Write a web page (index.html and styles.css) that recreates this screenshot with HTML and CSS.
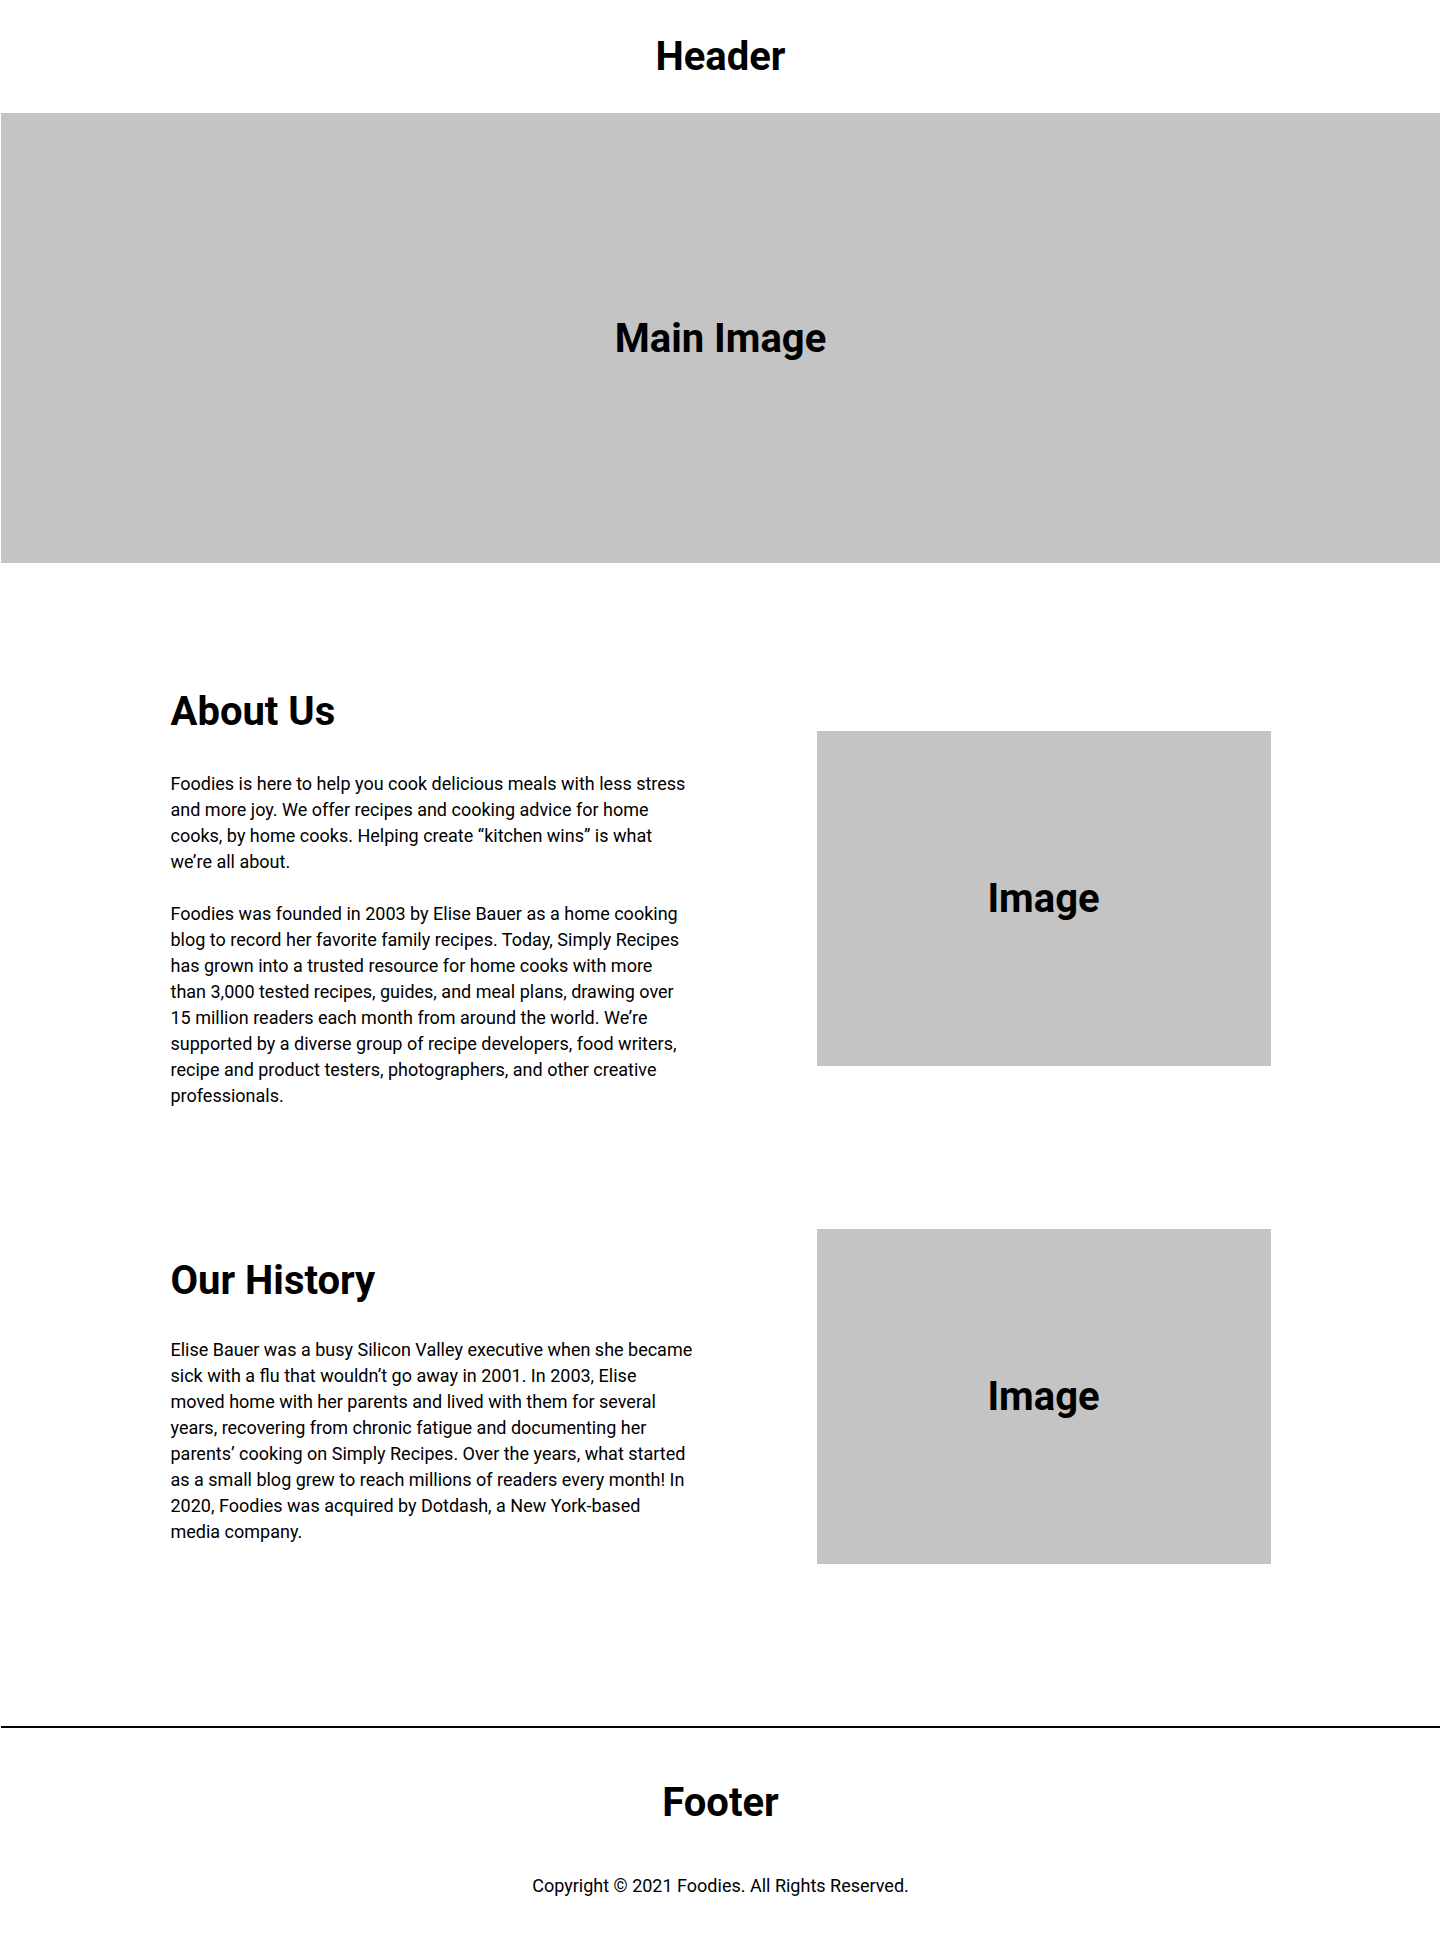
FILE: index.html
```html
<!DOCTYPE html>
<html lang="en">
<head>
<meta charset="utf-8">
<title>Foodies</title>
<link rel="stylesheet" href="styles.css">
</head>
<body>
<header class="site-header">
  <h1 class="site-title">Header</h1>
</header>
<div class="hero">
  <span class="placeholder-label">Main Image</span>
</div>
<main class="content">
  <section class="feature">
    <div class="feature-text">
      <h2 class="feature-title">About Us</h2>
      <p class="feature-copy">Foodies is here to help you cook delicious meals with less stress and more joy. We offer recipes and cooking advice for home cooks, by home cooks. Helping create “kitchen wins” is what we’re all about.</p>
      <p class="feature-copy">Foodies was founded in 2003 by Elise Bauer as a home cooking blog to record her favorite family recipes. Today, Simply Recipes has grown into a trusted resource for home cooks with more than 3,000 tested recipes, guides, and meal plans, drawing over 15 million readers each month from around the world. We’re supported by a diverse group of recipe developers, food writers, recipe and product testers, photographers, and other creative professionals.</p>
    </div>
    <div class="feature-image">
      <span class="placeholder-label">Image</span>
    </div>
  </section>
  <section class="feature">
    <div class="feature-text feature-text--offset">
      <h2 class="feature-title feature-title--tight">Our History</h2>
      <p class="feature-copy">Elise Bauer was a busy Silicon Valley executive when she became sick with a flu that wouldn’t go away in 2001. In 2003, Elise moved home with her parents and lived with them for several years, recovering from chronic fatigue and documenting her parents’ cooking on Simply Recipes. Over the years, what started as a small blog grew to reach millions of readers every month! In 2020, Foodies was acquired by Dotdash, a New York-based media company.</p>
    </div>
    <div class="feature-image">
      <span class="placeholder-label">Image</span>
    </div>
  </section>
</main>
<footer class="site-footer">
  <h2 class="footer-title">Footer</h2>
  <p class="copyright">Copyright © 2021 Foodies. All Rights Reserved.</p>
</footer>
</body>
</html>
```

FILE: styles.css
```css
* {
  box-sizing: border-box;
}

html, body {
  margin: 0;
  padding: 0;
  background: #ffffff;
}

body {
  padding-left: 1px;
  font-family: Roboto, "Liberation Sans", Arial, sans-serif;
  color: #000000;
}

.site-header {
  height: 113px;
  display: flex;
  align-items: center;
  justify-content: center;
}

.site-title,
.feature-title,
.footer-title,
.placeholder-label {
  margin: 0;
  font-size: 40px;
  font-weight: 700;
  line-height: normal;
}

.hero {
  height: 450px;
  background: #c4c4c4;
  display: flex;
  align-items: center;
  justify-content: center;
}

.content {
  padding: 125px 0 162px;
  display: flex;
  flex-direction: column;
  gap: 120px;
}

.feature {
  width: 1100px;
  margin: 0 auto;
  display: flex;
  align-items: center;
  justify-content: space-between;
}

.feature-text {
  width: 520px;
}

.feature-text--offset {
  width: 522px;
  padding-top: 8px;
}

.feature-title {
  margin-bottom: 36px;
}

.feature-title--tight {
  margin-bottom: 33px;
}

.feature-copy {
  margin: 0 0 26px;
  font-size: 18px;
  line-height: 26px;
}

.feature-copy:last-child {
  margin-bottom: 0;
}

.feature-image {
  width: 454px;
  height: 335px;
  background: #c4c4c4;
  display: flex;
  align-items: center;
  justify-content: center;
}

.site-footer {
  border-top: 2px solid #000000;
  padding: 51px 0 51px;
  display: flex;
  flex-direction: column;
  align-items: center;
  gap: 47px;
}

.copyright {
  margin: 0;
  font-size: 18px;
  line-height: 26px;
}
```
